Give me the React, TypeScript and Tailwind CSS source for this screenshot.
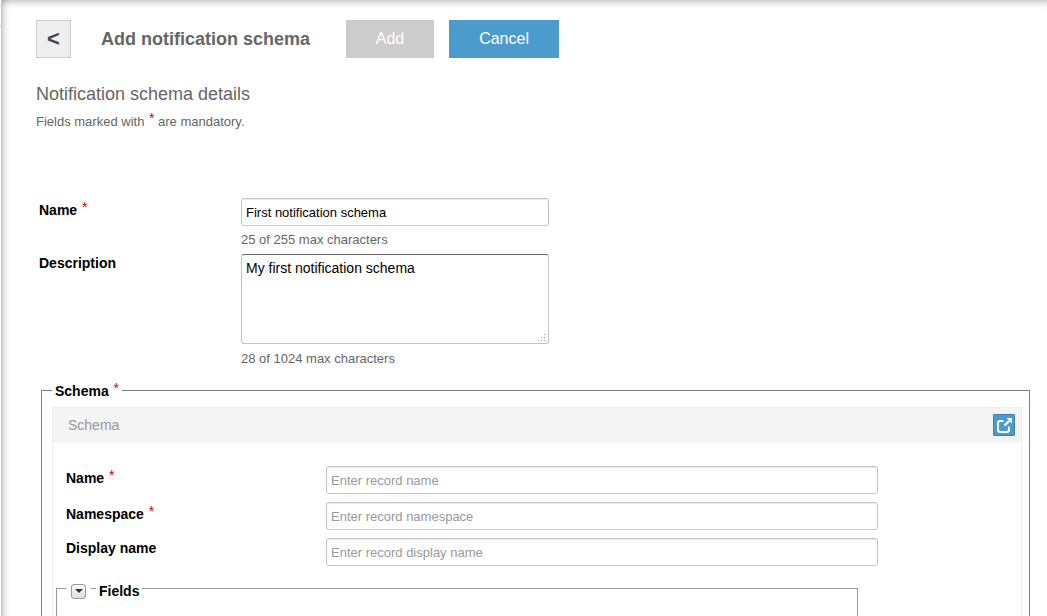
import React from "react";

const inputClass =
  "h-7 rounded-[3px] border border-[#c4c4c4] bg-white px-1 text-[13px] text-black shadow-[inset_0_1px_1px_rgba(0,0,0,0.08)] outline-none placeholder:text-[#999999] placeholder:opacity-100";

function Required() {
  return (
    <span className="relative -top-[3px] ml-px text-sm leading-none font-normal text-[#cc0000]">*</span>
  );
}

type RecordField = { id: string; label: string; placeholder: string; required: boolean };

const recordFields: RecordField[] = [
  { id: "record-name", label: "Name", placeholder: "Enter record name", required: true },
  { id: "record-namespace", label: "Namespace", placeholder: "Enter record namespace", required: true },
  { id: "record-display", label: "Display name", placeholder: "Enter record display name", required: false },
];

function ExportIcon() {
  return (
    <svg viewBox="0 0 22 22" className="size-full" fill="none" aria-hidden="true">
      <path
        d="M10.5 7H7.2Q5 7 5 9.2V15.8Q5 18 7.2 18H13.8Q16 18 16 15.8V12.5"
        stroke="white"
        strokeWidth="2"
      />
      <path d="M11.5 11.5L16 7" stroke="white" strokeWidth="2.4" />
      <path d="M13.5 4H19V9.5Z" fill="white" />
    </svg>
  );
}

function ResizeGrip() {
  return (
    <svg
      viewBox="0 0 8 8"
      className="pointer-events-none absolute right-[3px] bottom-[2px] size-2"
      fill="#999999"
      shapeRendering="crispEdges"
      aria-hidden="true"
    >
      <path d="M6 0h1v1h-1zM3 3h1v1h-1zM6 3h1v1h-1zM0 6h1v1h-1zM3 6h1v1h-1zM6 6h1v1h-1z" />
    </svg>
  );
}

export default function App() {
  return (
    <div className="flex min-h-screen bg-white font-['Liberation_Sans',Arial,sans-serif] text-black">
      <div className="mt-[5px] h-[22px] w-px border-y border-[#cccccc]" />
      <main className="flex min-w-0 flex-1 flex-col border-l border-[#c8c8c8] pt-5 pr-[17px] pl-[34px] shadow-[inset_0_9px_7px_-7px_rgba(0,0,0,0.27),inset_8px_0_7px_-7px_rgba(0,0,0,0.27)]">
        <header className="flex items-center">
          <button
            type="button"
            aria-label="Back"
            className="h-[38px] w-[35px] border border-[#cccccc] bg-[#eeeeee] pb-0.5 text-[22px] font-bold text-[#444444]"
          >
            &lt;
          </button>
          <h1 className="ml-[30px] text-lg font-bold text-[#666666]">Add notification schema</h1>
          <button
            type="button"
            disabled
            className="ml-9 h-[38px] w-[88px] bg-[#cccccc] text-base text-white"
          >
            Add
          </button>
          <button type="button" className="ml-[15px] h-[38px] w-[110px] bg-[#4b9bcd] text-base text-white">
            Cancel
          </button>
        </header>

        <h2 className="mt-6 text-lg leading-6 text-[#666666]">Notification schema details</h2>
        <p className="mt-1 text-[13px] leading-6 text-[#666666]">
          Fields marked with <Required /> are mandatory.
        </p>

        <form className="mt-16 flex flex-1 flex-col">
          <div className="flex pl-[3px]">
            <label htmlFor="schema-name" className="w-[202px] pt-0.5 text-sm font-bold">
              Name <Required />
            </label>
            <div className="flex flex-col">
              <input
                id="schema-name"
                defaultValue="First notification schema"
                className={`${inputClass} w-[308px]`}
              />
              <span className="py-1 text-[13px] leading-5 text-[#666666]">25 of 255 max characters</span>
            </div>
          </div>
          <div className="flex pl-[3px]">
            <label htmlFor="schema-description" className="w-[202px] text-sm leading-[18px] font-bold">
              Description
            </label>
            <div className="flex flex-col">
              <div className="relative flex">
                <textarea
                  id="schema-description"
                  defaultValue="My first notification schema"
                  className="h-[90px] w-[308px] resize-none rounded-[3px] border border-[#c4c4c4] border-t-[#666666] bg-white px-1 py-[3px] text-sm outline-none"
                />
                <ResizeGrip />
              </div>
              <span className="pt-[5px] pb-1 text-[13px] leading-5 text-[#666666]">
                28 of 1024 max characters
              </span>
            </div>
          </div>

          <fieldset className="mt-1.5 ml-[5px] flex flex-1 flex-col border border-b-0 border-[#808080] pr-[7px] pl-2.5">
            <legend className="px-[3px] pt-0.5 text-sm font-bold">
              Schema <Required />
            </legend>
            <section className="mt-1.5 flex flex-1 flex-col border border-b-0 border-[#eeeeee]">
              <div className="flex h-[35px] items-center justify-between bg-[#f4f4f4] pr-1.5 pb-0.5 pl-[15px]">
                <h3 className="text-sm text-[#999999]">Schema</h3>
                <button
                  type="button"
                  aria-label="Open schema"
                  className="size-[22px] rounded-[2px] bg-[#4b9bcd] shadow-[inset_0_0_0_1px_#3a7fae]"
                >
                  <ExportIcon />
                </button>
              </div>
              <div className="mt-[23px] flex flex-col gap-2 pl-[13px]">
                {recordFields.map((field) => (
                  <div key={field.id} className="flex">
                    <label
                      htmlFor={field.id}
                      className={`w-[260px] text-sm font-bold ${field.required ? "pt-0.5" : ""}`}
                    >
                      {field.label} {field.required && <Required />}
                    </label>
                    <input
                      id={field.id}
                      placeholder={field.placeholder}
                      className={`${inputClass} w-[552px]`}
                    />
                  </div>
                ))}
              </div>
              <fieldset className="mt-[9px] ml-[3px] w-[802px] flex-1 border border-b-0 border-[#999999] pl-[9px]">
                <legend className="flex items-center pt-1.5 text-sm font-bold">
                  <button
                    type="button"
                    aria-label="Toggle fields"
                    className="ml-[5px] flex size-[15px] items-center justify-center rounded-[3px] border border-[#999999] bg-linear-to-b from-white to-[#dddddd]"
                  >
                    <svg viewBox="0 0 8 4" className="h-1 w-2" aria-hidden="true">
                      <path d="M0 0H8L4 4Z" fill="#333333" />
                    </svg>
                  </button>
                  <span className="mb-1.5 ml-[5px] w-[5px] border-t border-[#999999]" />
                  <span className="px-[3px]">Fields</span>
                </legend>
              </fieldset>
            </section>
          </fieldset>
        </form>
      </main>
    </div>
  );
}
